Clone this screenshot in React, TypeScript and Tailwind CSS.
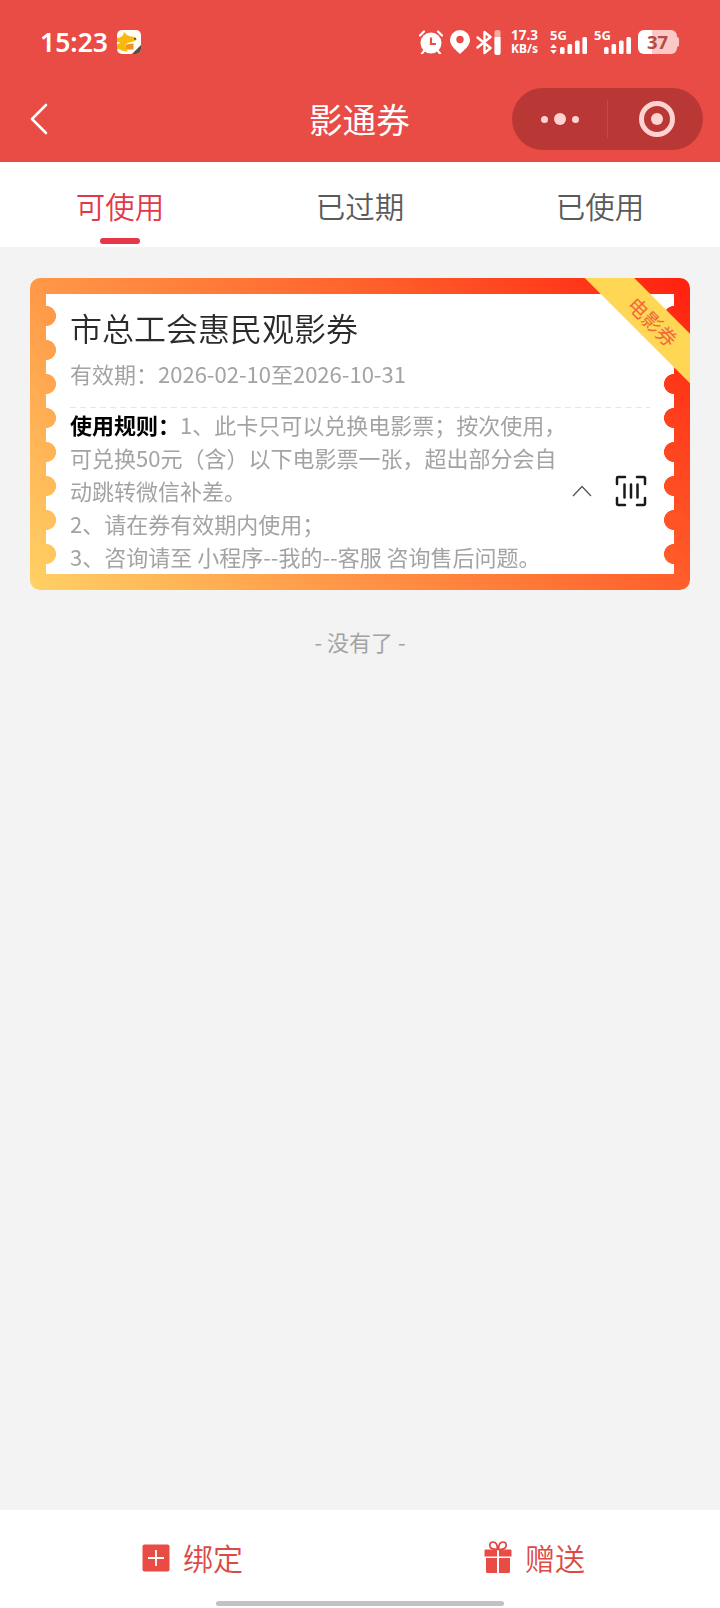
import type { ReactNode } from "react";

const tabs = ["可使用", "已过期", "已使用"];

function SignalBars({ className = "" }: { className?: string }) {
  return (
    <svg viewBox="0 0 27 17" className={`h-[17px] w-[27px] ${className}`} fill="#fff">
      <rect x="0" y="10" width="4.6" height="7" rx="1.5" />
      <rect x="7.5" y="7" width="4.6" height="10" rx="1.5" />
      <rect x="15" y="3.5" width="4.6" height="13.5" rx="1.5" />
      <rect x="22.4" y="0" width="4.6" height="17" rx="1.5" />
    </svg>
  );
}

function StatusBar() {
  return (
    <div className="flex h-[84px] items-center pl-10 font-['Noto_Sans',sans-serif] text-white">
      <span className="w-[77px] text-[26.5px] leading-none font-semibold">15:23</span>
      <svg viewBox="0 0 24 24" className="size-6">
        <rect width="24" height="24" rx="5" fill="#fffdf5" />
        <path d="M0 8 3 7.500 6 5.500 7 2l3 3 3.500 1.500L18 7l2 2.500-3.500 2-4.500 1-4 2 1 5 2 2-5-.500-4-2-2.500 1V15l4-2.500-4-1z" fill="#f8b90c" />
        <path d="m8.500 14.500 8-1v6h-8z" fill="#f39320" />
        <circle cx="18" cy="8.800" r=".9" fill="#222" />
        <path d="m15 24 9-9v4a5 5 0 0 1-5 5z" fill="#5b4b40" />
      </svg>
      <svg viewBox="0 0 24 24" className="ml-[278px] h-6 w-6">
        <circle cx="12" cy="13" r="10.5" fill="#fff" />
        <path d="M5 21 3 23.5M19 21l2 2.5M1 5.5 5 1.5M23 5.5l-4-4" stroke="#fff" strokeWidth="2.2" strokeLinecap="round" />
        <path d="M12 7.5V14h5" stroke="#e84c46" strokeWidth="2.2" fill="none" />
      </svg>
      <svg viewBox="0 0 20 24" className="ml-[7px] h-6 w-5">
        <path d="M10 0a10 10 0 0 1 10 10c0 6-7 11-10 14C7 21 0 16 0 10A10 10 0 0 1 10 0z" fill="#fff" />
        <circle cx="10" cy="9.5" r="3.7" fill="#e84c46" />
      </svg>
      <svg viewBox="0 0 25 25" className="ml-1.5 h-[25px] w-[25px]" fill="none">
        <path d="M1.5 7.5 14.500 18l-6 5V2l6 5L1.500 17.5" stroke="#fff" strokeWidth="2.4" strokeLinejoin="round" strokeLinecap="round" />
        <rect x="18.5" y="0" width="6" height="25" rx="2" fill="#f8aca7" />
        <path d="M18.5 7h6v16a2 2 0 0 1-2 2h-2a2 2 0 0 1-2-2z" fill="#fff" />
      </svg>
      <div className="ml-2.5 w-[39px] text-[13.5px] leading-[14px] font-bold">
        <p>17.3</p>
        <p className="text-[12px]">KB/s</p>
      </div>
      <div className="flex h-6 w-11 flex-col justify-between">
        <span className="text-[13px] leading-[11px] font-bold">5G</span>
        <div className="-mt-1 flex items-end gap-[3px]">
          <svg viewBox="0 0 7 10" className="h-2.5 w-[7px]" fill="#fff">
            <path d="m3.5 0 3.3 4H.2zM3.5 10 .2 6h6.6z" />
          </svg>
          <SignalBars />
        </div>
      </div>
      <div className="flex h-6 w-[44px] flex-col justify-between">
        <span className="text-[13px] leading-[11px] font-bold">5G</span>
        <SignalBars className="-mt-1 ml-[10px]" />
      </div>
      <div className="flex items-center">
        <div className="flex h-6 w-[39px] items-center justify-center rounded-[6px] bg-linear-to-r from-white from-37% to-[#fac9c6] to-37% text-[18.5px] leading-none font-bold text-[#b54a44]">
          37
        </div>
        <span className="h-2.5 w-0.5 rounded-r-full bg-[#fac9c6]" />
      </div>
    </div>
  );
}

function NavBar() {
  return (
    <div className="flex h-[78px] items-start text-white">
      <svg viewBox="0 0 20 32" className="mt-[19px] ml-[29px] h-8 w-5" fill="none">
        <path d="M17 2 3 16l14 14" stroke="#fff" strokeWidth="2.6" strokeLinecap="round" strokeLinejoin="round" />
      </svg>
      <h1 className="ml-[260px] w-[203px] pt-3 text-[33.6px] leading-[46px]">影通券</h1>
      <div className="mt-1 flex h-[62px] w-[191px] items-center rounded-full bg-[#b93835]">
        <div className="flex w-[95px] items-center justify-center gap-1.5 text-[#ffd3d1]">
          <i className="size-[7px] rounded-full bg-current" />
          <i className="size-3 rounded-full bg-current" />
          <i className="size-[7px] rounded-full bg-current" />
        </div>
        <i className="h-[38px] w-px bg-[#c84a46]" />
        <div className="ml-[31px] flex size-9 items-center justify-center rounded-full border-[5px] border-[#ffd3d1]">
          <i className="size-3 rounded-full bg-[#ffd3d1]" />
        </div>
      </div>
    </div>
  );
}

function Coupon() {
  return (
    <section className="relative mx-[30px] mt-[31px] h-[312px] overflow-hidden rounded-[10px] bg-[linear-gradient(45deg,#ffd265_0%,#ff9848_32%,#ff5e2a_68%,#ff200f_100%)] p-4">
      <div className="h-[280px] bg-white px-6 [mask:radial-gradient(circle_at_0_50%,transparent_9.7px,#000_10.3px)_0_5px/51%_34px_repeat-y,radial-gradient(circle_at_100%_50%,transparent_9.7px,#000_10.3px)_100%_5px/51%_34px_repeat-y]">
        <h2 className="pt-2.5 text-[32px] leading-[46px] font-[350] text-[#2b2b2b]">市总工会惠民观影券</h2>
        <p className="mt-[7px] h-[50px] text-[22px] leading-8 text-[#a3a3a3]">有效期：2026-02-10至2026-10-31</p>
        <svg viewBox="0 0 580 1" className="h-px w-[580px]">
          <path d="M0 .5h580" stroke="#e6e6e6" strokeWidth="1" strokeDasharray="6 4.100" />
        </svg>
        <div className="flex items-center">
          <div className="w-[500px] text-[22px] leading-[33px] whitespace-nowrap text-[#a3a3a3]">
            <p>
              <b className="font-bold text-black">使用规则：</b>1、此卡只可以兑换电影票；按次使用，
            </p>
            <p>可兑换50元（含）以下电影票一张，超出部分会自</p>
            <p>动跳转微信补差。</p>
            <p>2、请在券有效期内使用；</p>
            <p>3、咨询请至 小程序--我的--客服 咨询售后问题。</p>
          </div>
          <svg viewBox="0 0 20 12" className="ml-0.5 h-3 w-5 shrink-0" fill="none">
            <path d="m1 11 9-9.5 9 9.5" stroke="#555" strokeWidth="1.3" />
          </svg>
          <svg viewBox="0 0 32 32" className="ml-[23px] size-8 shrink-0" fill="none" stroke="#1a1a1a" strokeWidth="2.5" strokeLinecap="round">
            <path d="M2 9V3.200A1.200 1.200 0 0 1 3.200 2H10M22 2h6.800A1.200 1.200 0 0 1 30 3.200V9M30 23v5.800a1.200 1.200 0 0 1-1.200 1.200H22M10 30H3.200A1.200 1.200 0 0 1 2 28.800V23" />
            <path d="M9.500 9.500v13M16 9.500v13M22.500 9.500v13" />
          </svg>
        </div>
      </div>
      <div className="absolute top-[26px] left-[523px] flex h-[35px] w-[200px] rotate-45 items-center justify-center bg-[#ffd754] text-[20px] leading-none text-[#f2683c]">
        电影券
      </div>
    </section>
  );
}

function FooterAction({ icon, label, className }: { icon: ReactNode; label: string; className: string }) {
  return (
    <button className={`flex items-start pt-[26px] text-[30px] leading-[42px] font-[350] text-[#dc4a45] ${className}`}>
      {icon}
      {label}
    </button>
  );
}

export default function App() {
  return (
    <main className="flex h-[1608px] w-[720px] flex-col overflow-hidden bg-[#f3f3f3] font-['Noto_Sans_CJK_SC',sans-serif]">
      <header className="h-[162px] bg-[#e94b45]">
        <StatusBar />
        <NavBar />
      </header>
      <nav className="grid h-[85px] grid-cols-3 bg-white text-[29.5px]">
        {tabs.map((tab, i) => (
          <div key={tab} className={`flex flex-col items-center pt-[21px] font-[350] ${i === 0 ? "text-[#e43849]" : "text-[#5a5a5a]"}`}>
            <span className="h-[55px] leading-[44px]">{tab}</span>
            {i === 0 && <i className="h-1.5 w-10 rounded-full bg-[#e43849]" />}
          </div>
        ))}
      </nav>
      <Coupon />
      <p className="mt-[35px] text-center text-[22px] leading-8 text-[#a3a3a3]">- 没有了 -</p>
      <footer className="mt-auto h-[98px] bg-white">
        <div className="grid h-[91px] grid-cols-2">
          <FooterAction
            label="绑定"
            className="pl-[142px]"
            icon={
              <svg viewBox="0 0 28 28" className="mt-2 mr-[13px] h-7 w-7">
                <rect x=".5" y=".5" width="27" height="27" rx="2" fill="#e94b45" />
                <path d="M14 6v16M6 14h16" stroke="#fff" strokeWidth="1.800" />
              </svg>
            }
          />
          <FooterAction
            label="赠送"
            className="pl-[124px]"
            icon={
              <svg viewBox="0 0 28 32" className="mt-[5px] mr-[13px] h-8 w-7">
                <path
                  d="M13.500 8.500C9 8.500 5.800 7.500 5.800 4.500C5.800 2 7.500 1 9 1C12 1 13.500 4.500 13.500 8.500zM14.500 8.500C19 8.500 22.200 7.500 22.200 4.500C22.200 2 20.500 1 19 1C16 1 14.500 4.500 14.500 8.500z"
                  fill="none"
                  stroke="#e0443f"
                  strokeWidth="1.700"
                />
                <path d="M1.500 8.500h11.500V15.500H.5v-6a1 1 0 0 1 1-1zM15 8.500h11.500a1 1 0 0 1 1 1v6H15zM2 17h11v15H3.500A1.500 1.500 0 0 1 2 30.500zM15 17h11v13.500a1.500 1.500 0 0 1-1.500 1.500H15z" fill="#e94b45" />
              </svg>
            }
          />
        </div>
        <div className="mx-auto h-[5px] w-[288px] rounded-full bg-[#c2c2c2]" />
      </footer>
    </main>
  );
}
